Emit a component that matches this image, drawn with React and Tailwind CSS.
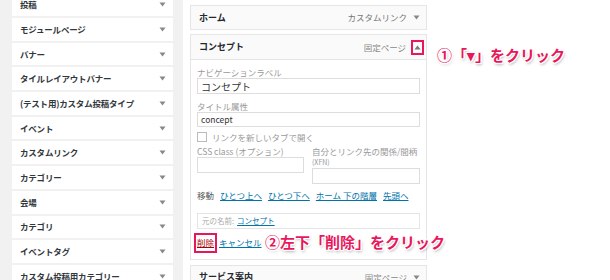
import React from 'react';

const font = { fontFamily: '"Noto Sans CJK JP", "Noto Sans", sans-serif' };

const menuItems = [
    '投稿',
    'モジュールページ',
    'バナー',
    'タイルレイアウトバナー',
    '(テスト用)カスタム投稿タイプ',
    'イベント',
    'カスタムリンク',
    'カテゴリー',
    '会場',
    'カテゴリ',
    'イベントタグ',
    'カスタム投稿用カテゴリー',
];

const Arrow = ({ up }) => (
    <svg width="7" height="5" viewBox="0 0 7 5" className="shrink-0">
        {up ? <path d="M0.5 4.5 L3.5 0.5 L6.5 4.5 Z" fill="#777" /> : <path d="M0.5 0.5 L3.5 4.5 L6.5 0.5 Z" fill="#888" />}
    </svg>
);

const Note = ({ children, className }) => (
    <div
        className={`absolute text-[15px] font-bold text-[#e8175d] whitespace-nowrap leading-none ${className}`}
        style={{ textShadow: '1px 0 #fff, -1px 0 #fff, 0 1px #fff, 0 -1px #fff, 1px 1px #fff, -1px -1px #fff, 1px -1px #fff, -1px 1px #fff, 1px 2px 3px rgba(0,0,0,0.35)' }}
    >
        {children}
    </div>
);

const Link = ({ children }) => <span className="text-[#0073aa] underline">{children}</span>;

const App = () => {
    return (
        <div className="relative w-[610px] h-[280px] overflow-hidden flex bg-[#f1f1f1]" style={font}>
            {/* left menu */}
            <div className="w-[183px] pl-[12px] pr-[10px] shrink-0">
                <div className="flex flex-col gap-[2px] mt-[-6.7px]">
                    {menuItems.map((item) => (
                        <div key={item} className="h-[22.7px] bg-white flex items-center justify-between pl-[8px] pr-[7px]">
                            <span className="text-[8.5px] font-bold text-[#32373c] tracking-[-0.2px]">{item}</span>
                            <Arrow />
                        </div>
                    ))}
                </div>
            </div>

            {/* right column */}
            <div className="flex-1 bg-white pl-[7px] pt-[5px]">
                <div className="w-[237px] flex flex-col">
                    <div className="h-[25px] border border-[#e5e5e5] bg-[#fafafa] flex items-center justify-between pl-[8px] pr-[6px]">
                        <span className="text-[9px] font-bold text-[#23282d]">ホーム</span>
                        <div className="flex items-center gap-[6px]">
                            <span className="text-[8.5px] text-[#777]">カスタムリンク</span>
                            <Arrow />
                        </div>
                    </div>

                    <div className="mt-[4px] border border-[#e5e5e5] bg-white">
                        <div className="h-[25px] bg-[#fafafa] border-b border-[#e5e5e5] flex items-center justify-between pl-[8px] pr-[2px]">
                            <span className="text-[9px] font-bold text-[#23282d]">コンセプト</span>
                            <div className="flex items-center gap-[5px]">
                                <span className="text-[8.5px] text-[#888]">固定ページ</span>
                                <div className="w-[13px] h-[15px] border-2 border-[#e8175d] flex items-center justify-center">
                                    <Arrow up />
                                </div>
                            </div>
                        </div>

                        <div className="px-[6px] pb-[6px] text-[8.5px] text-[#999]">
                            <div className="mt-[7px] leading-[10px]">ナビゲーションラベル</div>
                            <div className="mt-[1px] h-[16px] border border-[#ddd] flex items-center px-[3px] text-[10px] text-[#333]">コンセプト</div>
                            <div className="mt-[7px] leading-[10px]">タイトル属性</div>
                            <div className="mt-[1px] h-[15px] border border-[#ddd] flex items-center px-[3px] text-[8.5px] text-[#333]">concept</div>
                            <div className="mt-[4px] flex items-center gap-[5px]">
                                <div className="w-[10px] h-[10px] border border-[#bbb] bg-white" />
                                <span className="text-[8.5px] text-[#999]">リンクを新しいタブで開く</span>
                            </div>

                            <div className="mt-[2px] flex gap-[8px]">
                                <div className="w-[107px]">
                                    <div className="leading-[10px]">CSS class (オプション)</div>
                                    <div className="mt-[1px] h-[16px] border border-[#ddd]" />
                                </div>
                                <div className="flex-1">
                                    <div className="leading-[10px]">自分とリンク先の関係/間柄</div>
                                    <div className="mt-[1px] leading-[10px] text-[7px]">(XFN)</div>
                                    <div className="mt-[1px] h-[16px] border border-[#ddd]" />
                                </div>
                            </div>

                            <div className="mt-[5px] flex items-center gap-[6px] text-[8.5px]">
                                <span className="text-[#555]">移動</span>
                                <Link>ひとつ上へ</Link>
                                <Link>ひとつ下へ</Link>
                                <Link>ホーム 下の階層</Link>
                                <Link>先頭へ</Link>
                            </div>

                            <div className="mt-[11px] h-[16px] border border-[#e5e5e5] flex items-center px-[4px] gap-[3px] text-[7.5px]">
                                <span className="text-[#aaa]">元の名前:</span>
                                <Link>コンセプト</Link>
                            </div>

                            <div className="mt-[4px] flex items-center gap-[2px] text-[8.5px]">
                                <div className="h-[20px] w-[23px] border-2 border-[#e8175d] flex items-center justify-center -ml-[3px]">
                                    <span className="text-[#a00] underline">削除</span>
                                </div>
                                <Link>キャンセル</Link>
                            </div>
                        </div>
                    </div>

                    <div className="mt-[5px] h-[25px] border border-[#e5e5e5] bg-[#fafafa] flex items-center justify-between pl-[8px] pr-[6px]">
                        <span className="text-[9px] font-bold text-[#23282d]">サービス案内</span>
                        <div className="flex items-center gap-[6px]">
                            <span className="text-[8.5px] text-[#888]">固定ページ</span>
                            <Arrow />
                        </div>
                    </div>
                </div>
            </div>

            <Note className="left-[437px] top-[47px]">①「▾」をクリック</Note>
            <Note className="left-[265px] top-[234px]">②左下「削除」をクリック</Note>
        </div>
    );
};

export default App;
